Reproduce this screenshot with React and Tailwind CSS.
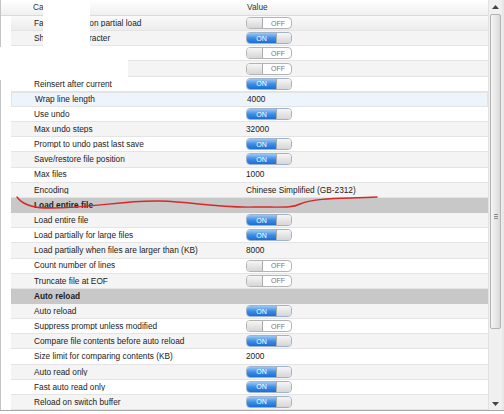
import React from 'react';

const rows = [
  { label: 'Fast read-only on partial load', value: 'off' },
  { label: 'Show EOL character', value: 'on' },
  { label: 'Show tabs', value: 'off' },
  { label: 'Show spaces', value: 'off' },
  { label: 'Reinsert after current', value: 'on' },
  { label: 'Wrap line length', value: '4000', hover: true },
  { label: 'Use undo', value: 'on' },
  { label: 'Max undo steps', value: '32000' },
  { label: 'Prompt to undo past last save', value: 'on' },
  { label: 'Save/restore file position', value: 'on' },
  { label: 'Max files', value: '1000' },
  { label: 'Encoding', value: 'Chinese Simplified (GB-2312)' },
  { section: 'Load entire file' },
  { label: 'Load entire file', value: 'on' },
  { label: 'Load partially for large files', value: 'on' },
  { label: 'Load partially when files are larger than (KB)', value: '8000' },
  { label: 'Count number of lines', value: 'off' },
  { label: 'Truncate file at EOF', value: 'off' },
  { section: 'Auto reload' },
  { label: 'Auto reload', value: 'on' },
  { label: 'Suppress prompt unless modified', value: 'off' },
  { label: 'Compare file contents before auto reload', value: 'on' },
  { label: 'Size limit for comparing contents (KB)', value: '2000' },
  { label: 'Auto read only', value: 'on' },
  { label: 'Fast auto read only', value: 'on' },
  { label: 'Reload on switch buffer', value: 'on' },
];

function Toggle({ on }) {
  if (on) {
    return (
      <div className="flex h-[12px] w-[46px] overflow-hidden rounded-[4px] border border-[#9fb4cc]">
        <div className="flex w-[29px] items-center justify-center bg-gradient-to-b from-[#9cc9f5] via-[#3d8ee6] to-[#1a6fd4] text-[7px] leading-none text-white">
          ON
        </div>
        <div className="flex-1 border-l border-[#aaaaaa] bg-gradient-to-b from-[#f6f6f6] to-[#d6d6d6]" />
      </div>
    );
  }
  return (
    <div className="flex h-[12px] w-[46px] overflow-hidden rounded-[4px] border border-[#b4b4b4] bg-white">
      <div className="w-[16px] border-r border-[#aaaaaa] bg-gradient-to-b from-[#f6f6f6] to-[#d6d6d6]" />
      <div className="flex flex-1 items-center justify-center pl-[2px] text-[7px] leading-none text-[#777777]">
        OFF
      </div>
    </div>
  );
}

function Row({ row, index }) {
  if (row.section) {
    return (
      <div className="flex h-[15.4px] pl-[10px]">
        <div className="flex flex-1 items-center bg-[#c8c8c8] pl-[23px] font-bold text-[#1e1e1e]">
          {row.section}
        </div>
      </div>
    );
  }
  const gray = index % 2 === 1;
  let bg = gray ? 'bg-[#f4f4f4]' : 'bg-white';
  if (index === 0) bg = 'bg-gradient-to-b from-[#fafafa] to-[#ececec]';
  if (row.hover) bg = 'bg-[#eef4fc] border border-[#c5d8f0]';
  const isToggle = row.value === 'on' || row.value === 'off';
  return (
    <div className="flex h-[15.4px] pl-[10px]">
      <div className={`flex flex-1 items-center border-b border-[#e4e4e4] ${bg}`}>
        <div className="w-[234px] shrink-0 truncate pl-[23px] text-[#222222]">{row.label}</div>
        <div className="flex items-center pl-[1px] text-[#222222]">
          {isToggle ? <Toggle on={row.value === 'on'} /> : row.value}
        </div>
      </div>
    </div>
  );
}

export default function App() {
  return (
    <div
      className="relative h-[414px] w-[504px] overflow-hidden bg-white text-[8.3px] leading-none"
      style={{ fontFamily: '"Liberation Sans", Arial, sans-serif' }}
    >
      <div className="flex h-[411px] border-b border-[#a8a8a8]">
        <div className="flex w-[488px] flex-col border-l border-[#c4c4c4]">
          <div className="flex h-[16px] shrink-0 items-center border-b border-[#dadada] bg-gradient-to-b from-white to-[#f0f0f0] text-[#333333]">
            <div className="w-[245px] shrink-0 pl-[32px]">Caption</div>
            <div className="pl-[1px]">Value</div>
          </div>
          {rows.map((row, i) => (
            <Row key={i} row={row} index={i} />
          ))}
        </div>

        {/* scrollbar */}
        <div className="relative flex w-[14px] flex-col items-center border-l border-[#e2e2e2] bg-[#f0f0f0]">
          <div className="flex h-[14px] items-center justify-center">
            <svg width="7" height="4" viewBox="0 0 7 4">
              <path d="M0 4 L3.5 0 L7 4 Z" fill="#444" />
            </svg>
          </div>
          <div className="flex h-[315px] w-[11px] items-center justify-center rounded-[2px] border border-[#b2b2b2] bg-gradient-to-r from-[#f6f6f6] to-[#dadada]">
            <div className="mt-[90px] flex flex-col gap-[1px]">
              <div className="h-px w-[4px] bg-[#8a8a8a]" />
              <div className="h-px w-[4px] bg-[#8a8a8a]" />
              <div className="h-px w-[4px] bg-[#8a8a8a]" />
            </div>
          </div>
          <div className="flex-1" />
          <div className="flex h-[12px] items-center justify-center">
            <svg width="7" height="4" viewBox="0 0 7 4">
              <path d="M0 0 L3.5 4 L7 0 Z" fill="#444" />
            </svg>
          </div>
        </div>
        <div className="w-[2px] bg-[#e8e8e8]" />
      </div>

      {/* redaction boxes */}
      <div className="absolute left-[43px] top-0 h-[47px] w-[47px] bg-white" />
      <div className="absolute left-0 top-[47px] h-[33px] w-[128px] bg-white" />

      {/* red pen annotation */}
      <svg className="pointer-events-none absolute left-0 top-0" width="504" height="414">
        <path
          d="M17 197 Q24 207 45 208 C90 209 120 200 160 201 C195 202 215 208 255 207 C285 207 292 208 300 204 C318 197 345 199 377 197"
          fill="none"
          stroke="#d8262b"
          strokeWidth="1.4"
          strokeLinecap="round"
        />
      </svg>
    </div>
  );
}
